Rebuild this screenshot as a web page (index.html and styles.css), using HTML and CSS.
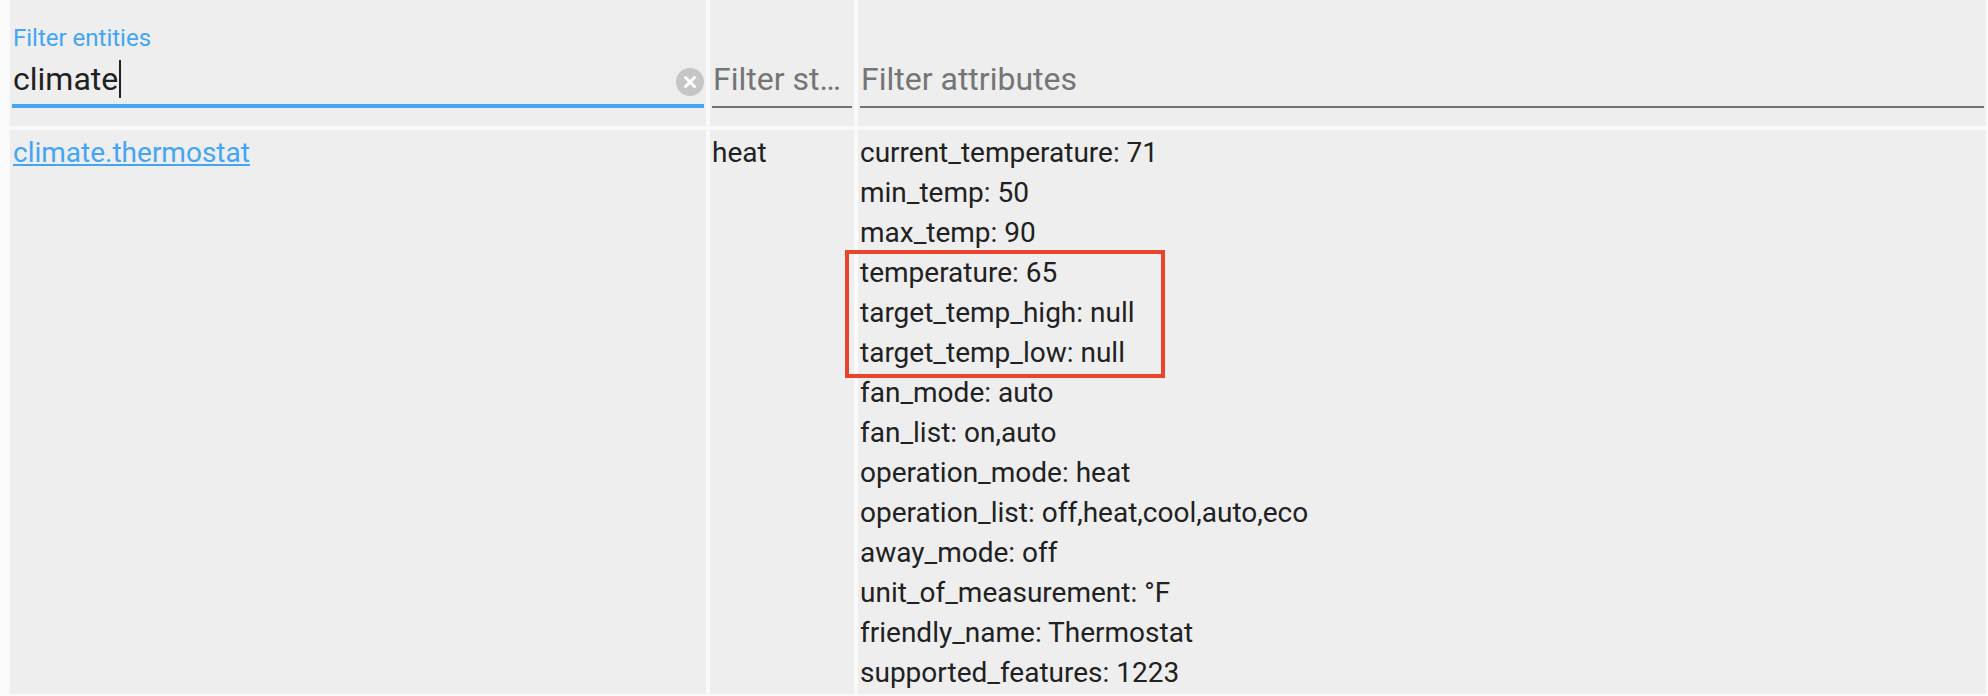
FILE: index.html
```html
<!DOCTYPE html>
<html lang="en">
<head>
<meta charset="utf-8">
<title>States</title>
<link rel="stylesheet" href="styles.css">
</head>
<body>
<div class="page">
  <div class="states">
    <div class="cell head">
      <div class="field focused">
        <div class="label">Filter entities</div>
        <div class="input-row">
          <span class="value">climate</span><span class="caret"></span>
          <span class="spacer"></span>
          <svg class="clear" viewBox="0 0 28 28" width="28" height="28" aria-hidden="true">
            <circle cx="14" cy="14" r="14" fill="#c6c6c6"/>
            <path d="M9.5 9.5 L18.5 18.5 M18.5 9.5 L9.5 18.5" stroke="#ffffff" stroke-width="3" stroke-linecap="round"/>
          </svg>
        </div>
        <div class="underline"></div>
      </div>
    </div>
    <div class="cell head">
      <div class="field">
        <div class="label"></div>
        <div class="input-row"><span class="placeholder">Filter states</span></div>
        <div class="underline"></div>
      </div>
    </div>
    <div class="cell head">
      <div class="field">
        <div class="label"></div>
        <div class="input-row"><span class="placeholder">Filter attributes</span></div>
        <div class="underline"></div>
      </div>
    </div>

    <div class="cell body"><a class="entity" href="#">climate.thermostat</a></div>
    <div class="cell body">heat</div>
    <div class="cell body attrs">
      <div>current_temperature: 71</div>
      <div>min_temp: 50</div>
      <div>max_temp: 90</div>
      <div>temperature: 65</div>
      <div>target_temp_high: null</div>
      <div>target_temp_low: null</div>
      <div>fan_mode: auto</div>
      <div>fan_list: on,auto</div>
      <div>operation_mode: heat</div>
      <div>operation_list: off,heat,cool,auto,eco</div>
      <div>away_mode: off</div>
      <div>unit_of_measurement: °F</div>
      <div>friendly_name: Thermostat</div>
      <div>supported_features: 1223</div>
      <div class="highlight"></div>
    </div>
  </div>
</div>
</body>
</html>
```

FILE: styles.css
```css
html, body {
  margin: 0;
  padding: 0;
  background: #fafafa;
}

body {
  font-family: Roboto, "Noto Sans", "Liberation Sans", sans-serif;
  color: #212121;
  width: 1988px;
  height: 696px;
  overflow: hidden;
}

.page {
  padding: 0 0 0 10px;
}

.states {
  display: grid;
  grid-template-columns: 696px 144px 1128px;
  grid-template-rows: 126px auto;
  gap: 4px;
}

.cell {
  background: #eeeeee;
  padding: 0 2px;
  min-width: 0;
}

.cell.body {
  padding: 3px 2px 1px;
  font-size: 28px;
  line-height: 40px;
}

.field {
  padding-top: 22px;
}

.label {
  font-size: 24px;
  line-height: 32px;
  height: 32px;
  color: #42a5f5;
  padding-left: 1px;
}

.input-row {
  display: flex;
  height: 50px;
  font-size: 32px;
  line-height: 50px;
  min-width: 0;
}

.value {
  color: #212121;
  padding-left: 1px;
}

.caret {
  width: 2px;
  height: 38px;
  margin-top: 6px;
  margin-left: 1px;
  background: #212121;
}

.spacer {
  flex: 1;
}

.clear {
  margin-top: 14px;
  flex: none;
}

.placeholder {
  display: block;
  width: 100%;
  color: #757575;
  white-space: nowrap;
  overflow: hidden;
  text-overflow: ellipsis;
  padding-left: 1px;
}

.underline {
  height: 4px;
  box-sizing: border-box;
  border-bottom: 2px solid #737373;
}

.focused .underline {
  border-bottom: 4px solid #42a5f5;
}

.entity {
  color: #42a5f5;
  text-decoration: underline;
  text-decoration-thickness: 2px;
  text-underline-offset: 2px;
  padding-left: 1px;
}

.attrs {
  position: relative;
}

.highlight {
  position: absolute;
  left: -13px;
  top: 120px;
  width: 320px;
  height: 128px;
  box-sizing: border-box;
  border: 4px solid #e8452c;
}
```
